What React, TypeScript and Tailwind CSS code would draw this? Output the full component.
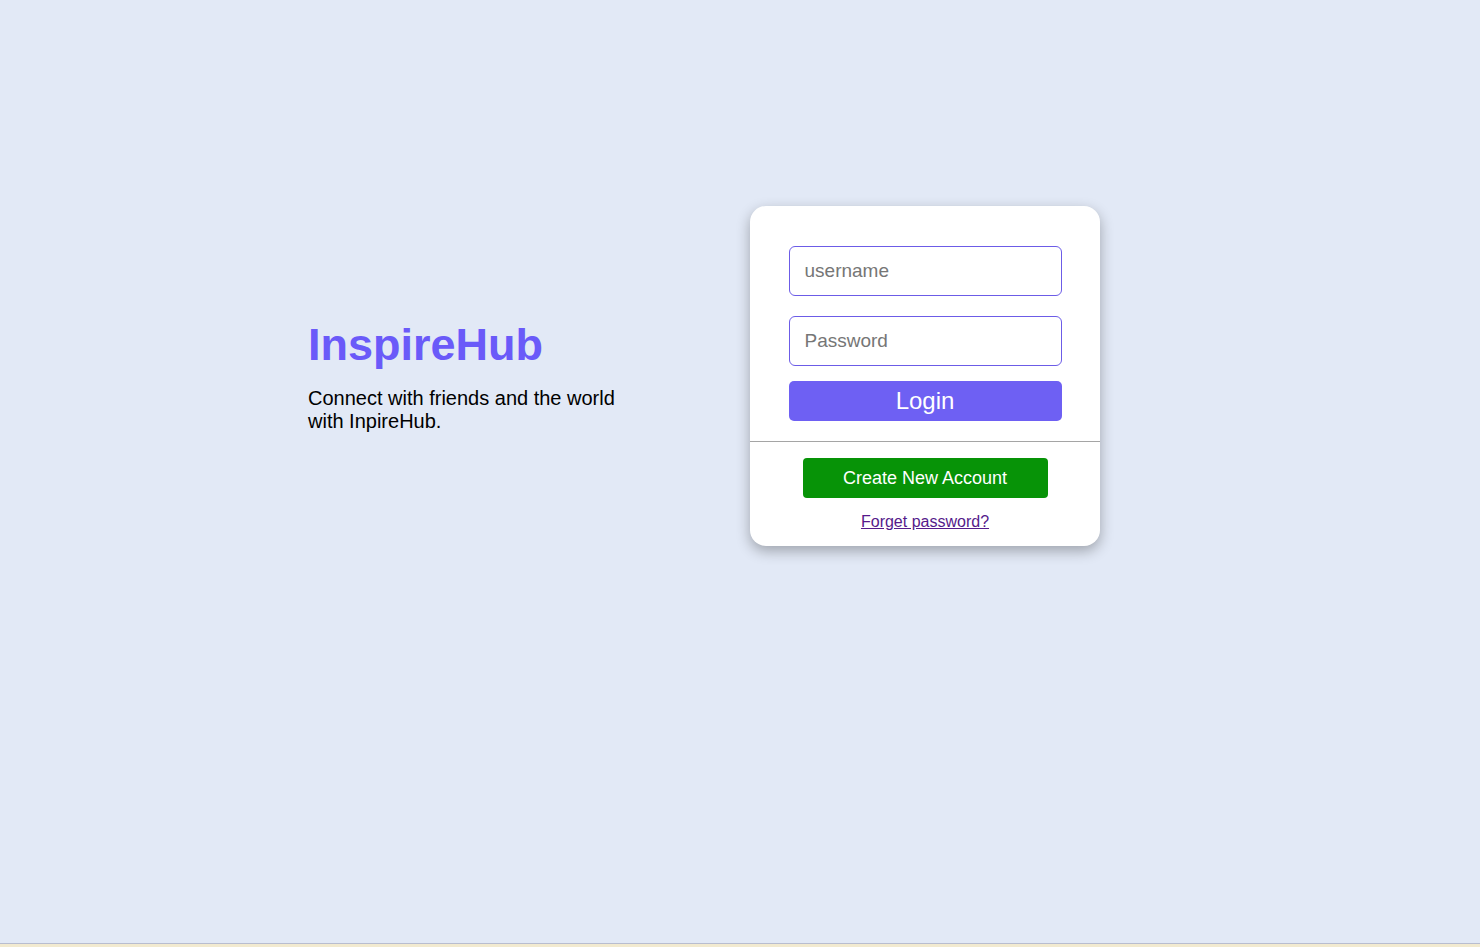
import React, { useState } from 'react';

export default function App() {
  const [username, setUsername] = useState('');
  const [password, setPassword] = useState('');

  return (
    <div className="h-[947px] flex flex-col bg-[#e2e9f6] font-['Liberation_Sans',Arial,sans-serif] overflow-hidden">
      {/* Main area */}
      <div className="h-[943px] flex items-start pt-[206px] pl-[308px]">
        <div className="flex items-center gap-[72px]">
          {/* Brand */}
          <div className="w-[370px]">
            <h1 className="text-[45px] leading-[52px] font-bold text-[#6a5af9] mb-[16px]">InspireHub</h1>
            <p className="w-[330px] text-[20px] leading-[23px] text-black">
              Connect with friends and the world with InpireHub.
            </p>
          </div>

          {/* Login card */}
          <div className="w-[350px] h-[340px] bg-white rounded-[16px] shadow-[0_5px_14px_rgba(0,0,0,0.3)] flex flex-col">
            <form
              className="flex flex-col items-center pt-[40px] pb-[20px] border-b border-[#a5a5a5]"
              onSubmit={(e) => e.preventDefault()}
            >
              <input
                type="text"
                placeholder="username"
                value={username}
                onChange={(e) => setUsername(e.target.value)}
                className="w-[273px] h-[50px] px-[15px] text-[19px] border border-[#6c5ce7] rounded-[6px] outline-none placeholder:text-[#767676]"
              />
              <input
                type="password"
                placeholder="Password"
                value={password}
                onChange={(e) => setPassword(e.target.value)}
                className="mt-[20px] w-[273px] h-[50px] px-[15px] text-[19px] border border-[#6c5ce7] rounded-[6px] outline-none placeholder:text-[#767676]"
              />
              <button
                type="submit"
                className="mt-[15px] w-[273px] h-[40px] bg-[#6e60f3] text-white text-[24px] rounded-[5px]"
              >
                Login
              </button>
            </form>

            <div className="flex flex-col items-center pt-[16px]">
              <button className="w-[245px] h-[40px] bg-[#079307] text-white text-[18px] rounded-[4px]">
                Create New Account
              </button>
              <a href="#" className="mt-[15px] text-[16px] leading-[18px] text-[#551a8b] underline">
                Forget password?
              </a>
            </div>
          </div>
        </div>
      </div>

      {/* bottom strip */}
      <div className="h-px bg-[#b8bdcf]" />
      <div className="h-[3px] bg-[#f2ead0]" />
    </div>
  );
}
